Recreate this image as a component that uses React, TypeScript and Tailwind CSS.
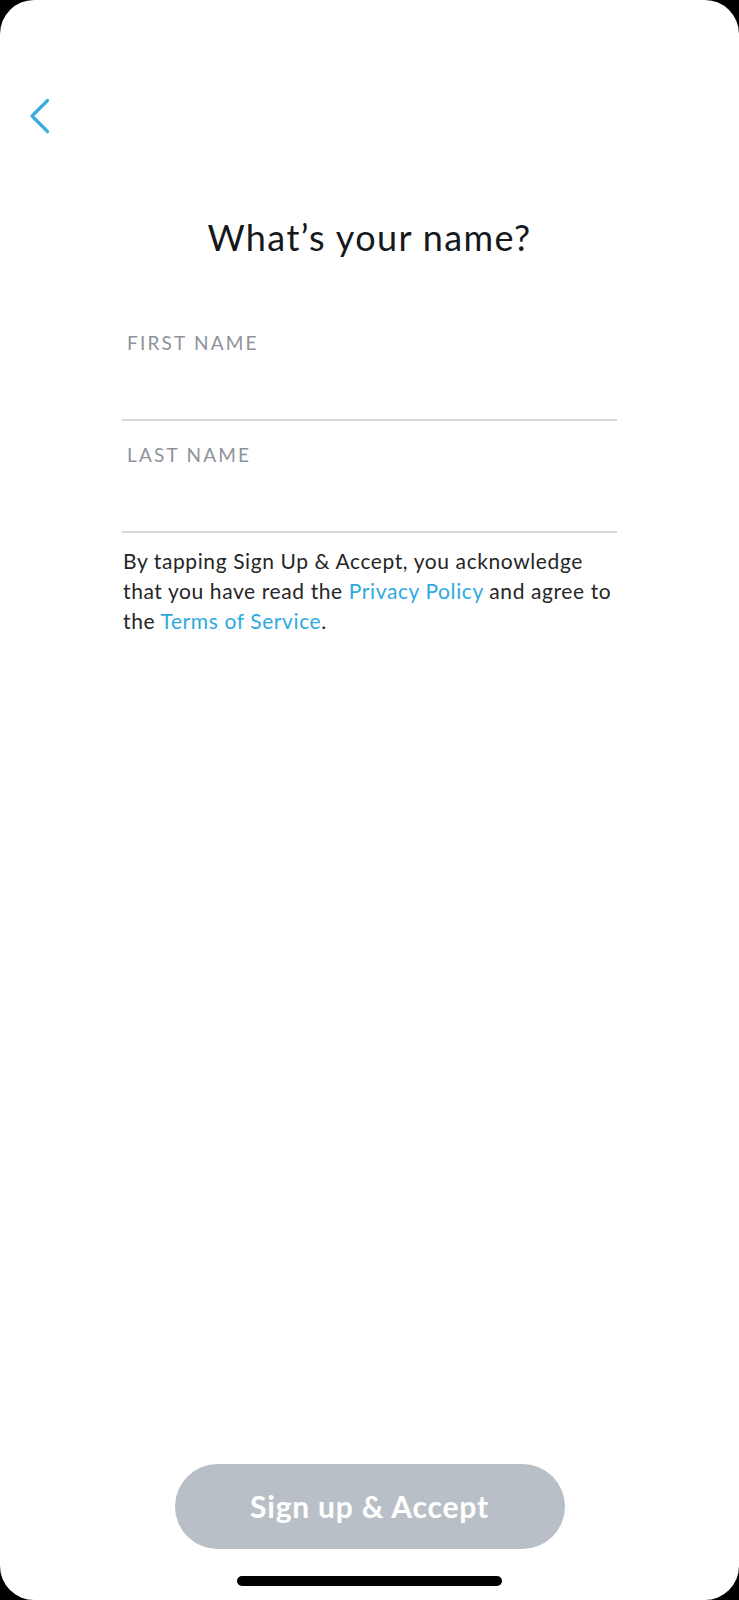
import React from "react";

export default function App() {
  return (
    <div className="w-[739px] h-[1600px] bg-black" style={{ fontFamily: 'Lato, "Noto Sans", sans-serif' }}>
      <div className="relative w-[739px] h-[1600px] bg-white rounded-[34px] flex flex-col overflow-hidden">
        <div className="pt-[98px] pl-[29px] h-[134px]">
          <svg width="21" height="36" viewBox="0 0 21 36" fill="none">
            <path d="M18.5 2.5 L3 18 L18.5 33.5" stroke="#3AAEE0" strokeWidth="3.2" strokeLinecap="round" strokeLinejoin="round" />
          </svg>
        </div>
        <h1 className="mt-[82px] text-center text-[36px] leading-[42px] tracking-[1.4px] text-[#16191c] font-normal">
          What’s your name?
        </h1>
        <div className="px-[122px] mt-[73px] flex flex-col">
          <div className="flex flex-col">
            <label className="pl-[5px] text-[19px] leading-[24px] tracking-[2.2px] text-[#8e939b]">FIRST NAME</label>
            <div className="mt-[64px] h-[2px] bg-[#d3d6da]" />
          </div>
          <div className="flex flex-col mt-[22px]">
            <label className="pl-[5px] text-[19px] leading-[24px] tracking-[2.2px] text-[#8e939b]">LAST NAME</label>
            <div className="mt-[64px] h-[2px] bg-[#d3d6da]" />
          </div>
          <p className="mt-[13px] text-[21px] leading-[30px] tracking-[0.6px] text-[#262626] pl-[1px] whitespace-nowrap">
            By tapping Sign Up &amp; Accept, you acknowledge
            <br />
            that you have read the <span className="text-[#2ea9e0]">Privacy Policy</span> and agree to
            <br />
            the <span className="text-[#2ea9e0]">Terms of Service</span>.
          </p>
        </div>
        <div className="mt-auto flex flex-col items-center">
          <button className="w-[390px] h-[85px] rounded-full bg-[#b9bfc7] text-white text-[30px] tracking-[0.8px] font-bold">
            Sign up &amp; Accept
          </button>
          <div className="mt-[27px] mb-[14px] w-[265px] h-[10px] rounded-full bg-black" />
        </div>
      </div>
    </div>
  );
}
